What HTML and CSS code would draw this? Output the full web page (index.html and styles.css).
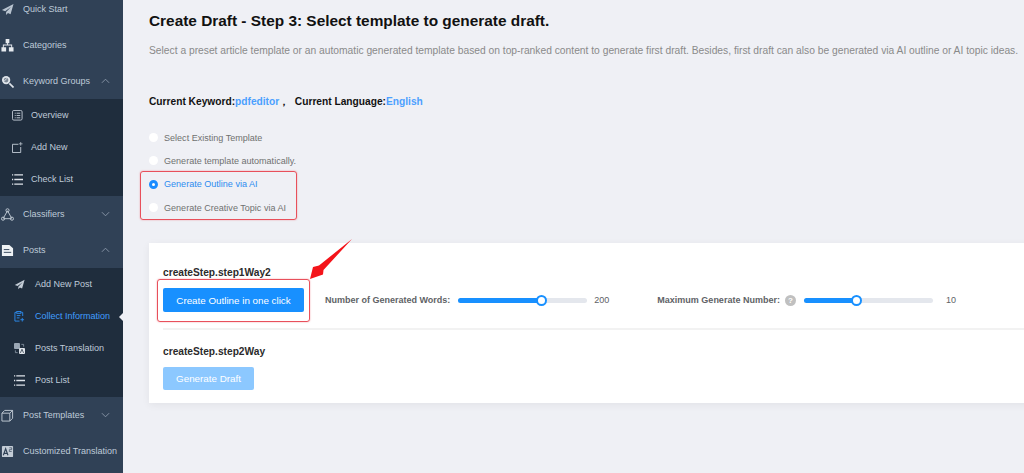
FILE: index.html
```html
<!DOCTYPE html>
<html lang="en">
<head>
<meta charset="utf-8">
<title>Create Draft</title>
<link rel="stylesheet" href="styles.css">
</head>
<body>
<div class="app">
  <aside class="sidebar">
    <div class="item first"><svg class="ico" viewBox="0 0 14 14"><path fill="#b9c4d0" d="M13.500 1 1 7.500l3.500 1.300L11 4 5.500 9.800V13l2-2.200 2.800 1.200z"/></svg><span>Quick Start</span></div>
    <div class="item"><svg class="ico" viewBox="0 0 14 14"><path fill="#e6eaef" d="M5 0h4v4.500H7.500V6H12v3h1.500v4.500h-5V9H11V7H3v2h2.500v4.500h-5V9H2V6h4.500V4.500H5z"/></svg><span>Categories</span></div>
    <div class="item"><svg class="ico" viewBox="0 0 14 14"><circle cx="5.500" cy="5.500" r="4.500" fill="#dfe4ea"/><circle cx="5.500" cy="5.500" r="2.500" fill="#7b8794"/><path d="M3.500 6.500 6.500 3.500" stroke="#dfe4ea" stroke-width="1"/><path d="M9 9l4.500 4.500" stroke="#dfe4ea" stroke-width="1.800"/></svg><span>Keyword Groups</span><svg class="chev" viewBox="0 0 10 6"><path d="M1 5l4-4 4 4"/></svg></div>
    <div class="sub">
      <div class="subitem"><svg class="ico" viewBox="0 0 12 12"><rect x=".5" y=".5" width="10.500" height="10.500" rx="1.500" fill="none" stroke="#c3ccd6"/><path d="M3 3.500h1M5 3.500h4M3 6h1M5 6h4M3 8.500h1M5 8.500h4" stroke="#c3ccd6"/></svg><span>Overview</span></div>
      <div class="subitem"><svg class="ico" viewBox="0 0 12 12"><path d="M7 2.500H.5v9h9V5.500" fill="none" stroke="#c3ccd6"/><path d="M9.500 0v4M7.500 2h4" stroke="#c3ccd6" stroke-width=".8"/></svg><span>Add New</span></div>
      <div class="subitem"><svg class="ico" viewBox="0 0 12 12"><path d="M0 1h1.300M2.500 1H12M0 6h1.300M2.500 6H12M0 11h1.300M2.500 11H12" stroke="#dfe4ea" stroke-width="1.400"/></svg><span>Check List</span></div>
    </div>
    <div class="item"><svg class="ico" viewBox="0 0 14 14"><path d="M7 3 2.500 11M7 3l4.500 8M2.500 11.500h9" fill="none" stroke="#c3ccd6"/><circle cx="7" cy="2.500" r="1.700" fill="none" stroke="#c3ccd6"/><circle cx="2.200" cy="11.500" r="1.700" fill="none" stroke="#c3ccd6"/><circle cx="11.800" cy="11.500" r="1.700" fill="none" stroke="#c3ccd6"/></svg><span>Classifiers</span><svg class="chev" viewBox="0 0 10 6"><path d="M1 1l4 4 4-4"/></svg></div>
    <div class="item"><svg class="ico" viewBox="0 0 14 14"><path fill="#eef1f4" d="M1 1h8l4 3.500V13H1z"/><path d="M3 6h6M3 9h8" stroke="#2f4055"/></svg><span>Posts</span><svg class="chev" viewBox="0 0 10 6"><path d="M1 5l4-4 4 4"/></svg></div>
    <div class="sub posts-sub">
      <div class="subitem"><svg class="ico" viewBox="0 0 14 14"><path fill="#c3ccd6" d="M13.500 1 1 7.500l3.500 1.300L11 4 5.500 9.800V13l2-2.200 2.800 1.200z"/></svg><span>Add New Post</span></div>
      <div class="subitem active"><svg class="ico" viewBox="0 0 12 12"><path d="M2.500 1.500H1v9.500h5M8 1.500h1.500v4" fill="none" stroke="#2d8cf0"/><rect x="3" y=".5" width="4.500" height="2" fill="none" stroke="#2d8cf0"/><path d="M3 5h4M3 7.500h3M9 7.500v4M7 9.500h4" stroke="#2d8cf0"/></svg><span>Collect Information</span></div>
      <div class="subitem"><svg class="ico" viewBox="0 0 12 12"><rect x="0" y="0" width="6.500" height="6.500" rx="1" fill="#9aa7b5"/><rect x="5.500" y="5.500" width="6.500" height="6.500" rx="1" fill="#dfe4ea"/><path d="M7 10.800l1.700-4 1.700 4" fill="none" stroke="#1f2d3d" stroke-width=".8"/><path d="M8 1.500h2.500V4M4 10.500H1.500V8" fill="none" stroke="#9aa7b5" stroke-width=".8"/></svg><span>Posts Translation</span></div>
      <div class="subitem"><svg class="ico" viewBox="0 0 12 12"><path d="M0 1h1.300M2.500 1H12M0 6h1.300M2.500 6H12M0 11h1.300M2.500 11H12" stroke="#dfe4ea" stroke-width="1.400"/></svg><span>Post List</span></div>
    </div>
    <div class="item"><svg class="ico" viewBox="0 0 14 14"><path d="M1 4.500h8.500V13H1zM1 4.500 4 1.500h8.500V10l-3 3M9.500 4.500l3-3" fill="none" stroke="#c3ccd6"/></svg><span>Post Templates</span><svg class="chev" viewBox="0 0 10 6"><path d="M1 1l4 4 4-4"/></svg></div>
    <div class="item"><svg class="ico" viewBox="0 0 14 14"><rect x="1" y="1" width="12" height="12" rx="1" fill="#c3ccd6"/><path d="M2.500 11l2.500-7 2.500 7M3.500 9h3" fill="none" stroke="#2f4055" stroke-width="1.200"/><path d="M9 3h2.500v2H9v2h2.500" fill="none" stroke="#2f4055" stroke-width=".7"/></svg><span>Customized Translation</span></div>
  </aside>

  <main class="main">
    <h1 class="title">Create Draft - Step 3: Select template to generate draft.</h1>
    <p class="desc">Select a preset article template or an automatic generated template based on top-ranked content to generate first draft. Besides, first draft can also be generated via AI outline or AI topic ideas.</p>
    <p class="current">Current Keyword:<span class="link">pdfeditor</span>，&nbsp; Current Language:<span class="link">English</span></p>

    <div class="radios">
      <label class="radio"><i class="dot"></i>Select Existing Template</label>
      <label class="radio"><i class="dot"></i>Generate template automatically.</label>
      <label class="radio on"><i class="dot"></i>Generate Outline via AI</label>
      <label class="radio"><i class="dot"></i>Generate Creative Topic via AI</label>
      <div class="mark mark-radios"></div>
    </div>

    <section class="card">
      <div class="step first-step">
        <h2 class="step-title">createStep.step1Way2</h2>
        <div class="controls">
          <button class="btn">Create Outline in one click</button>
          <span class="label words-label">Number of Generated Words:</span>
          <div class="slider"><div class="fill fill-words"><i class="thumb"></i></div></div>
          <span class="val val-words">200</span>
          <span class="label max-label">Maximum Generate Number:</span>
          <i class="help">?</i>
          <div class="slider"><div class="fill fill-max"><i class="thumb"></i></div></div>
          <span class="val val-max">10</span>
          <div class="mark mark-btn"></div>
          <svg class="arrow" viewBox="0 0 46 46"><path fill="#f4141a" d="M42 3 13.500 34 13 38.500 0 43 3 31l6-1.500z"/></svg>
        </div>
      </div>
      <div class="step second-step">
        <h2 class="step-title">createStep.step2Way</h2>
        <button class="btn disabled">Generate Draft</button>
      </div>
    </section>
  </main>
</div>
</body>
</html>
```
FILE: styles.css
```css
* { box-sizing: border-box; }
html, body { margin: 0; height: 473px; overflow: hidden; }
body { font-family: "Liberation Sans", Arial, sans-serif; background: #eff0f5; color: #111; }
.app { display: flex; height: 473px; overflow: hidden; }

.sidebar { width: 123px; flex: none; background: #304156; margin-top: -9px; height: 491px; overflow: hidden; }
.item { height: 36px; display: flex; align-items: center; padding-left: 1px; color: #bfcbd9; font-size: 9px; position: relative; }
.item .ico { width: 13px; height: 13px; margin-right: 9px; flex: none; }
.chev { position: absolute; left: 101px; top: 15px; width: 9px; height: 6px; fill: none; stroke: #8c9aab; stroke-width: 1; }
.sub { background: #1f2d3d; padding: 0 0 1px; }
.subitem { height: 32px; display: flex; align-items: center; padding-left: 12px; color: #bfcbd9; font-size: 9px; position: relative; }
.subitem .ico { width: 11px; height: 11px; margin-right: 8px; flex: none; }
.posts-sub .subitem { padding-left: 14px; }
.posts-sub .subitem .ico { margin-right: 10px; }
.subitem.active { color: #409eff; }
.subitem.active::after { content: ""; position: absolute; right: 0; top: 13px; border: 4px solid transparent; border-right-color: #eff0f5; border-left-width: 0; }

.main { flex: 1; min-width: 0; padding: 12px 0 0 26px; }
.title { margin: 0; font-size: 15.400px; line-height: 18px; font-weight: 700; color: #111; white-space: nowrap; }
.desc { margin: 14px 0 0; font-size: 10.270px; line-height: 14px; color: #8a8a8a; white-space: nowrap; }
.current { margin: 37px 0 0; font-size: 10.200px; line-height: 14px; font-weight: 700; color: #111; white-space: nowrap; }
.link { color: #4ba0ff; }

.radios { margin-top: 17px; position: relative; width: 200px; }
.radio { display: flex; align-items: center; height: 23.300px; font-size: 9.050px; color: #707070; white-space: nowrap; }
.radio.on { color: #2d8cf0; }
.dot { width: 9px; height: 9px; border-radius: 50%; background: #fff; margin-right: 6px; flex: none; }
.radio.on .dot { border: 3px solid #1a8cff; }
.mark { position: absolute; border: 1px solid #e8505b; border-radius: 3px; box-shadow: 0 0 1.500px rgba(232,80,91,.7); pointer-events: none; }
.mark-radios { left: -9px; top: 45px; width: 157px; height: 49px; }

.card { margin-top: 24px; width: 900px; height: 160px; background: #fff; box-shadow: 0 2px 8px rgba(0,0,0,.06); padding: 0 14px; }
.step-title { margin: 0; font-size: 10.200px; line-height: 14px; font-weight: 700; color: #2b2b2b; }
.first-step { height: 87px; border-bottom: 2px solid #f2f2f2; padding-top: 23px; }
.second-step { padding-top: 15px; }
.controls { display: flex; align-items: center; margin-top: 8px; position: relative; }
.btn { height: 24px; width: 141px; border: 0; border-radius: 2px; background: #1890ff; color: #fff; font: 9.800px "Liberation Sans", Arial, sans-serif; padding: 0; flex: none; }
.btn.disabled { width: 91px; height: 23px; background: #8cc8ff; margin-top: 8px; display: block; }
.label { font-size: 9px; font-weight: 700; color: #606266; white-space: nowrap; flex: none; }
.words-label { margin-left: 21px; }
.slider { width: 129px; height: 5px; background: #e4e7ed; border-radius: 3px; flex: none; margin-left: 8px; }
.fill { height: 5px; background: #1890ff; border-radius: 3px; position: relative; }
.fill-words { width: 84px; }
.fill-max { width: 53px; }
.thumb { position: absolute; right: -5px; top: -3px; width: 11px; height: 11px; border: 2px solid #1890ff; background: #fff; border-radius: 50%; }
.val { font-size: 9px; color: #606266; margin-left: 7px; flex: none; }
.val-words { width: 31px; }
.val-max { margin-left: 13px; }
.max-label { margin-left: 32px; }
.help { width: 11px; height: 11px; border-radius: 50%; background: #c0c0c0; color: #fff; font: 700 8px/11px "Liberation Sans", sans-serif; text-align: center; margin-left: 5px; flex: none; }
.mark-btn { left: -6px; top: -9px; width: 153px; height: 43px; }
.arrow { position: absolute; left: 147px; top: -52px; width: 46px; height: 46px; }
```
